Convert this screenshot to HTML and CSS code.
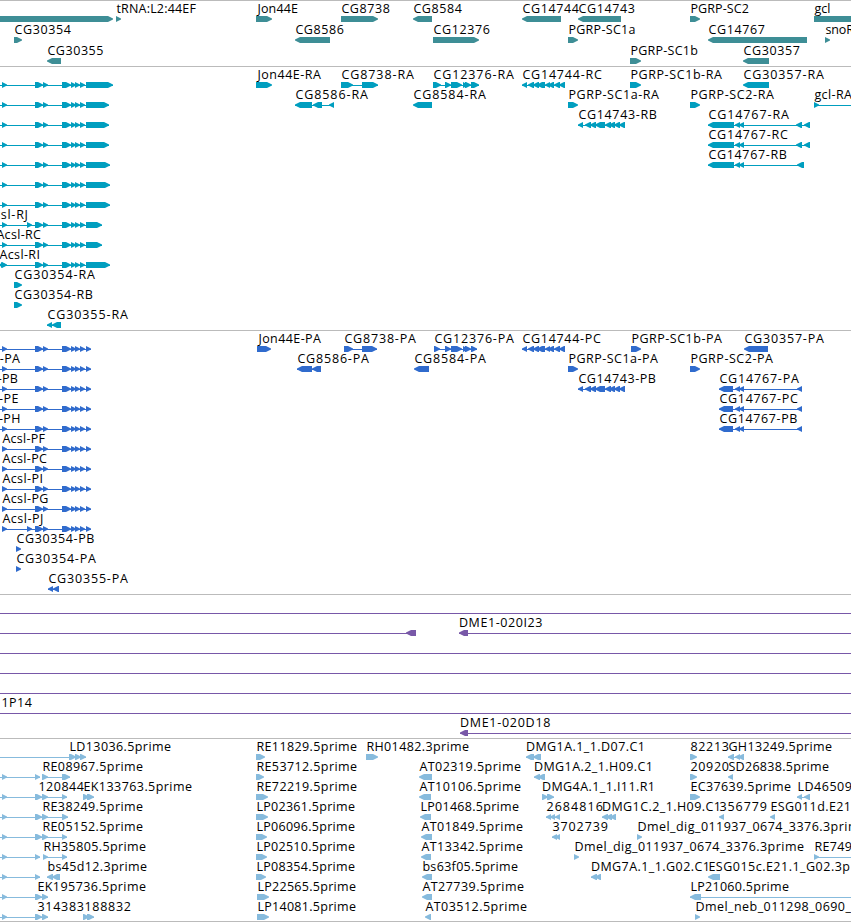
FILE: index.html
```html
<!DOCTYPE html>
<html lang="en">
<head>
    <meta charset="UTF-8">
    <title>Genome browser</title>
    <link rel="stylesheet" href="styles.css">
</head>
<body>
    <div class="browser">
        <div class="track genes" id="genes"></div>
        <div class="track transcripts" id="transcripts"></div>
        <div class="track proteins" id="proteins"></div>
        <div class="track clones" id="clones"></div>
        <div class="track reads" id="reads"></div>
    </div>
    <script src="tracks.js"></script>
</body>
</html>
```
FILE: styles.css
```css
body{margin:0;background:#fff;overflow:hidden;}
.browser{width:851px;height:922px;overflow:hidden;}
.track{box-sizing:border-box;padding:2px 0 1px;border-top:1px solid #bbb;}
.lane{display:block;width:851px;height:20px;overflow:visible;}
.label{font:12.5px "Open Sans","DejaVu Sans",sans-serif;letter-spacing:.45px;fill:#000;}

.genes{padding-bottom:0;fill:#3e8e96;}
.genes .lane{height:21px;}
.transcripts{fill:#009ebf;}
.proteins{fill:#306bcd;}
.clones{fill:#7858a8;}
.reads{padding-bottom:0;border-bottom:1px solid #bbb;fill:#87bbdd;}
```
FILE: tracks.js
```js
// feature: [label, label start, label end (0 = natural width), strand, parts]
// a part past the edge of the view keeps the connector running off screen
var LEFT = [-20, -10], RIGHT = [870, 880];

function acsl(label, x, end, tail, extra) {
    var parts = [LEFT, [2, 7]].concat(extra || [], [[35, 43], [43, 48], [62, 71], [71, 76], [75, 80], [80, 85]], [[86, tail]]);
    return [label, x, end, 1, parts];
}
function acslP(label, x, end, extra) {
    var f = acsl(label, x, end, 91, extra);
    if (x > 0) f[4].shift();
    return f;
}

var p14744 = [[522, 527], [528, 534], [533, 539], [537, 545], [545, 550], [548, 554], [554, 560], [559, 565]];
var p14743 = [[578, 583], [585, 591], [590, 596], [595, 605], [605, 611], [609, 615], [614, 620], [619, 625]];
var p14767 = [[708, 734], [735, 740], [739, 744], [796, 802], [804, 810]];
var q14767 = [[719, 733], [735, 740], [739, 744], [797, 802]];

var tracks = {
    genes: [
        [
            ["", 0, 0, 1, [[-20, 113]]],
            ["tRNA:L2:44EF", 116, 196, 1, [[116, 121]]],
            ["Jon44E", 257, 298, 1, [[256, 272]]],
            ["CG8738", 341, 390, 1, [[341, 378]]],
            ["CG8584", 413, 462, -1, [[413, 432]]],
            ["CG14744", 522, 579, -1, [[522, 561]]],
            ["CG14743", 578, 635, -1, [[578, 621]]],
            ["PGRP-SC2", 690, 749, 1, [[690, 700]]],
            ["gcl", 814, 830.5, 1, [[814, 880]]]
        ],
        [
            ["CG30354", 14, 71, 1, [[14, 22]]],
            ["CG8586", 295, 344, -1, [[295, 330]]],
            ["CG12376", 433, 490, 1, [[433, 479]]],
            ["PGRP-SC1a", 568, 635.5, 1, [[568, 578]]],
            ["CG14767", 708, 765, -1, [[708, 807]]],
            ["snoR", 825, 854, 1, [[825, 830]]]
        ],
        [
            ["CG30355", 47, 103.5, -1, [[47, 61]]],
            ["PGRP-SC1b", 630, 698, 1, [[630, 641]]],
            ["CG30357", 743, 800, -1, [[743, 769]]]
        ]
    ],
    transcripts: [
        [
            acsl("", 0, 0, 113),
            ["Jon44E-RA", 257, 321, 1, [[256, 272]]],
            ["CG8738-RA", 341, 414, 1, [[341, 353], [362, 378]]],
            ["CG12376-RA", 433, 514, 1, [[433, 441], [445, 451], [451, 462], [463, 468], [465, 471], [471, 479]]],
            ["CG14744-RC", 522, 602, -1, p14744],
            ["PGRP-SC1b-RA", 630, 722, 1, [[630, 641]]],
            ["CG30357-RA", 743, 824, -1, [[743, 769]]]
        ],
        [
            acsl("", 0, 0, 109),
            ["CG8586-RA", 295, 368, -1, [[295, 312], [313, 322], [329, 334]]],
            ["CG8584-RA", 413, 486, -1, [[413, 432]]],
            ["PGRP-SC1a-RA", 568, 659, 1, [[568, 578]]],
            ["PGRP-SC2-RA", 690, 774, 1, [[690, 700]]],
            ["gcl-RA", 814, 852, 1, [[814, 819], RIGHT]]
        ],
        [
            acsl("", 0, 0, 109),
            ["CG14743-RB", 578, 657, -1, p14743],
            ["CG14767-RA", 708, 789, -1, p14767]
        ],
        [acsl("", 0, 0, 109), ["CG14767-RC", 708, 788, -1, p14767]],
        [acsl("", 0, 0, 110), ["CG14767-RB", 708, 787, -1, p14767.slice(0, 3).concat([[797, 804]])]],
        [acsl("", 0, 0, 110)],
        [acsl("", 0, 0, 110)],
        [acsl("Acsl-RJ", -15, 28, 102, [[27, 32]])],
        [acsl("Acsl-RC", -4, 41, 102)],
        [acsl("Acsl-RI", -1, 40, 110, [[-3, 2], [1, 6]])],
        [["CG30354-RA", 14, 95, 1, [[14, 22]]]],
        [["CG30354-RB", 14, 93, 1, [[14, 22]]]],
        [["CG30355-RA", 47, 128, -1, [[47, 52], [52, 61]]]]
    ],
    proteins: [
        [
            acslP("", 0, 0),
            ["Jon44E-PA", 258, 321, 1, [[257, 271]]],
            ["CG8738-PA", 344, 416, 1, [[344, 353], [362, 377]]],
            ["CG12376-PA", 434, 514, 1, [[434, 440], [445, 451], [451, 462], [463, 468], [465, 471], [471, 477]]],
            ["CG14744-PC", 522, 601, -1, p14744],
            ["PGRP-SC1b-PA", 631, 722, 1, [[631, 641]]],
            ["CG30357-PA", 744, 824, -1, [[744, 768]]]
        ],
        [
            acslP("Acsl-PA", -25, 20),
            ["CG8586-PA", 297, 369, -1, [[297, 312], [312, 321]]],
            ["CG8584-PA", 414, 486, -1, [[414, 429]]],
            ["PGRP-SC1a-PA", 568, 658, 1, [[568, 578]]],
            ["PGRP-SC2-PA", 690, 773, 1, [[690, 700]]]
        ],
        [
            acslP("Acsl-PB", -27, 18),
            ["CG14743-PB", 578, 656, -1, p14743],
            ["CG14767-PA", 719, 799, -1, q14767]
        ],
        [acslP("Acsl-PE", -26, 18.5), ["CG14767-PC", 719, 798, -1, q14767]],
        [acslP("Acsl-PH", -26, 20.5), ["CG14767-PB", 719, 797.5, -1, q14767]],
        [acslP("Acsl-PF", 2, 45)],
        [acslP("Acsl-PC", 2, 47)],
        [acslP("Acsl-PI", 2, 43)],
        [acslP("Acsl-PG", 2, 48.5)],
        [acslP("Acsl-PJ", 2, 43.5, [[27, 32]])],
        [["CG30354-PB", 16, 94.5, 1, [[16, 21]]]],
        [["CG30354-PA", 16, 96, 1, [[16, 21]]]],
        [["CG30355-PA", 48, 128, -1, [[48, 53], [53, 59]]]]
    ],
    clones: [
        [["", 0, 0, 1, [LEFT, RIGHT]]],
        [
            ["", 0, 0, -1, [LEFT, [406, 416]]],
            ["DME1-020I23", 458.5, 542.5, -1, [[459, 468], RIGHT]]
        ],
        [["", 0, 0, 1, [LEFT, RIGHT]]],
        [["", 0, 0, 1, [LEFT, RIGHT]]],
        [["", 0, 0, 1, [LEFT, RIGHT]]],
        [["1P14", 1, 32, 1, [LEFT, RIGHT]]],
        [["DME1-020D18", 459.5, 550.5, -1, [[460, 468], RIGHT]]]
    ],
    reads: [
        [
            ["LD13036.5prime", 69, 171, 1, [LEFT, [69, 76], [75, 81], [80, 86]]],
            ["RE11829.5prime", 256, 357, 1, [[256, 265]]],
            ["RH01482.3prime", 366, 469, 1, [[366, 378]]],
            ["DMG1A.1_1.D07.C1", 525.5, 645, -1, [[526, 534], [533, 541]]],
            ["82213", 690, 729, 1, [[690, 697]]],
            ["GH13249.5prime", 728, 832, -1, [[728, 734], [735, 740], [738, 744]]]
        ],
        [
            ["", 0, 0, 1, [LEFT, [2, 7], [35, 40]]],
            ["RE08967.5prime", 42, 143, 1, [[42, 48], [62, 70]]],
            ["RE53712.5prime", 256, 357, 1, [[256, 264]]],
            ["AT02319.5prime", 419, 521, -1, [[419, 432]]],
            ["DMG1A.2_1.H09.C1", 533.5, 653, -1, [[534, 540], [538, 545]]],
            ["20920", 690, 729, 1, [[690, 697]]],
            ["SD26838.5prime", 728, 829, -1, [[728, 733]]]
        ],
        [
            ["120844", 38, 84, 1, [LEFT, [2, 7], [35, 42], [42, 48], [62, 67]]],
            ["EK133763.5prime", 83, 192, 1, [[83, 89], [87, 94]]],
            ["RE72219.5prime", 256, 357, 1, [[256, 268]]],
            ["AT10106.5prime", 419, 521, -1, [[419, 431]]],
            ["DMG4A.1_1.I11.R1", 541.5, 655, 1, [[542, 548], [547, 554]]],
            ["EC37639.5prime", 690, 791, 1, [[690, 700]]],
            ["LD46509", 797, 852, -1, [[797, 802], [804, 810]]]
        ],
        [
            ["RE38249.5prime", 42, 143, 1, [LEFT, [2, 7], [35, 42], [42, 48], [62, 68]]],
            ["LP02361.5prime", 256, 355, 1, [[256, 268]]],
            ["LP01468.5prime", 420, 519, -1, [[420, 431]]],
            ["2684816", 546, 603, -1, [[546, 551], [550, 555], [555, 560]]],
            ["DMG1C.2_1.H09.C1", 601.5, 721, -1, [[602, 608], [606, 612], [610, 616]]],
            ["356779", 719, 767, -1, [[719, 724]]],
            ["ESG011d.E21", 770, 851, -1, [[770, 775]]]
        ],
        [
            ["RE05152.5prime", 42, 143, 1, [LEFT, [2, 7], [35, 42], [42, 48], [62, 67]]],
            ["LP06096.5prime", 256, 355, 1, [[256, 267]]],
            ["AT01849.5prime", 421, 523, -1, [[421, 432]]],
            ["3702739", 552, 608, -1, [[552, 557], [555, 560]]],
            ["Dmel_dig_011937_0674_3376.3prime", 637, 867, 1, [[637, 642]]]
        ],
        [
            ["", 0, 0, 1, [LEFT, [2, 7], [35, 40]]],
            ["RH35805.5prime", 43, 146, 1, [[43, 48], [62, 67]]],
            ["LP02510.5prime", 256, 355, 1, [[256, 267]]],
            ["AT13342.5prime", 421, 523, -1, [[421, 431]]],
            ["Dmel_dig_011937_0674_3376.3prime", 574, 804, 1, [[574, 579]]],
            ["RE749", 814, 852, 1, [[814, 819], RIGHT]]
        ],
        [
            ["", 0, 0, 1, [LEFT, [2, 7], [35, 40]]],
            ["bs45d12.3prime", 47, 147, -1, [[47, 53], [52, 60]]],
            ["LP08354.5prime", 256, 355, 1, [[256, 266]]],
            ["bs63f05.5prime", 422, 518, -1, [[422, 432]]],
            ["DMG7A.1_1.G02.C1", 590.5, 710, -1, [[591, 597], [595, 601]]],
            ["ESG015c.E21.1_G02.3p", 708, 850, -1, [[708, 720]]]
        ],
        [
            ["EK195736.5prime", 37, 146, 1, [LEFT, [2, 7], [35, 42], [42, 48]]],
            ["LP22565.5prime", 257, 356, 1, [[257, 269]]],
            ["AT27739.5prime", 422, 524, -1, [[422, 432]]],
            ["LP21060.5prime", 690, 789, -1, [[690, 701], RIGHT]]
        ],
        [
            ["314383", 37, 84, 1, [LEFT, [2, 7], [35, 42], [42, 48]]],
            ["188832", 84, 131, 1, [[83, 89], [87, 94]]],
            ["LP14081.5prime", 257, 356, 1, [[257, 269]]],
            ["AT03512.5prime", 425, 527, -1, [[425, 431]]],
            ["Dmel_neb_011298_0690_", 695, 851, 1, [[695, 700]]]
        ]
    ]
};

var NS = "http://www.w3.org/2000/svg";

function add(parent, tag, attrs) {
    var el = document.createElementNS(NS, tag);
    for (var k in attrs) el.setAttribute(k, attrs[k]);
    parent.appendChild(el);
    return el;
}

// block with a 5px tip on the 3' side
function arrow(a, b, strand) {
    var tip = Math.min(5, b - a);
    if (strand > 0) return "M" + a + " 13H" + (b - tip) + "L" + b + " 15.5V16.5L" + (b - tip) + " 19H" + a + "Z";
    return "M" + b + " 13H" + (a + tip) + "L" + a + " 15.5V16.5L" + (a + tip) + " 19H" + b + "Z";
}

function drawFeature(svg, f) {
    var parts = f[4], from = parts[0][0], to = parts[parts.length - 1][1];
    if (parts.length > 1) add(svg, "rect", {x: from, y: 16, width: to - from, height: 1});
    for (var i = 0; i < parts.length; i++) add(svg, "path", {d: arrow(parts[i][0], parts[i][1], f[3])});
    if (!f[0]) return;
    var attrs = {"class": "label", x: f[1] + 0.4, y: 10};
    if (f[2]) attrs.textLength = f[2] - f[1];
    add(svg, "text", attrs).textContent = f[0];
}

for (var id in tracks) {
    tracks[id].forEach(function(lane) {
        var svg = add(document.getElementById(id), "svg", {"class": "lane"});
        lane.forEach(function(f) { drawFeature(svg, f); });
    });
}
```
